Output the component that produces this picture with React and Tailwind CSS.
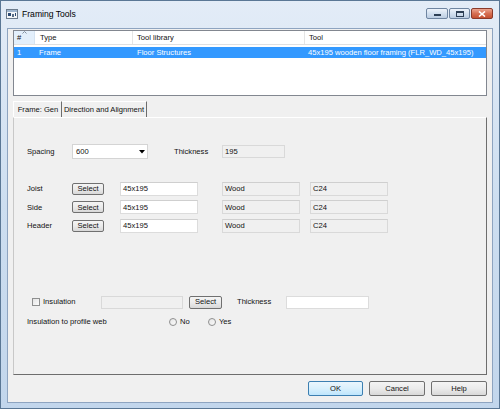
import React from 'react';

const ReadBox = ({ w, children }) => (
  <div className={`${w} h-[14px] bg-[#f0f0f0] border border-[#d9d9d9] border-t-[#cfcfcf] flex items-center pl-[2px]`}>
    {children}
  </div>
);

const WhiteBox = ({ w, h = 'h-[14px]', children }) => (
  <div className={`${w} ${h} bg-white border border-[#dcdcdc] border-t-[#cfcfcf] flex items-center pl-[2px]`}>
    {children}
  </div>
);

const Btn = ({ w, h = 'h-[12px]', children, primary }) => (
  <div
    className={`${w} ${h} rounded-[2px] border flex items-center justify-center ${
      primary
        ? 'border-[#3c7fb1] bg-gradient-to-b from-[#eaf6fd] via-[#d9f0fc] to-[#bee6fd]'
        : 'border-[#707070] bg-gradient-to-b from-[#f4f4f4] via-[#ebebeb] to-[#d8d8d8]'
    }`}
  >
    {children}
  </div>
);

const Radio = () => (
  <div className="w-[8px] h-[8px] rounded-full border border-[#8e8f8f] bg-gradient-to-br from-[#e6e6e6] to-[#fafafa]" />
);

const PartRow = ({ label }) => (
  <div className="flex items-center h-[14px]">
    <div className="w-[45px]">{label}</div>
    <Btn w="w-[32px]">Select</Btn>
    <div className="ml-[16px]">
      <WhiteBox w="w-[78px]">45x195</WhiteBox>
    </div>
    <div className="ml-[24px]">
      <ReadBox w="w-[78px]">Wood</ReadBox>
    </div>
    <div className="ml-[10px]">
      <ReadBox w="w-[78px]">C24</ReadBox>
    </div>
  </div>
);

const App = () => {
  return (
    <div className="w-[500px] h-[409px] bg-gradient-to-b from-[#e3ecf7] via-[#cddef0] to-[#c2d6ec] border border-[#5a7795] flex flex-col font-['Liberation_Sans',Arial,sans-serif] text-[7.6px] text-[#111] leading-none overflow-hidden">
      {/* title bar */}
      <div className="h-[27px] flex items-start pl-[5px] pr-[6px] pt-[7px]">
        <svg width="12" height="10" viewBox="0 0 12 10" className="mt-[1px]">
          <rect x="0.5" y="0.5" width="11" height="9" fill="#f4f6f8" stroke="#6b7b8c" />
          <rect x="1" y="1" width="10" height="2" fill="#9fb6cf" />
          <rect x="2" y="4" width="3" height="3" fill="#2b4a73" />
          <rect x="6" y="5" width="2" height="3" fill="#5a6f86" />
          <rect x="9" y="4" width="1" height="3" fill="#2b4a73" />
        </svg>
        <div className="ml-[4px] mt-[2px] text-[8.6px] text-black">Framing Tools</div>
        <div className="ml-auto flex gap-[1px]">
          <div className="w-[22px] h-[11px] rounded-[2px] border border-[#6f85a1] bg-gradient-to-b from-[#eef3fa] via-[#d3e0ef] to-[#bccde2] flex items-center justify-center">
            <div className="w-[7px] h-[2px] bg-[#2e3f55] mt-[3px]" />
          </div>
          <div className="w-[21px] h-[11px] rounded-[2px] border border-[#6f85a1] bg-gradient-to-b from-[#eef3fa] via-[#d3e0ef] to-[#bccde2] flex items-center justify-center">
            <div className="w-[8px] h-[6px] border border-[#2e3f55] border-t-2" />
          </div>
          <div className="w-[22px] h-[11px] rounded-[2px] border border-[#8a3a2a] bg-gradient-to-b from-[#eba48f] via-[#d66f52] to-[#c44f30] flex items-center justify-center">
            <svg width="8" height="6" viewBox="0 0 8 6">
              <path d="M1 0.5 L7 5.5 M7 0.5 L1 5.5" stroke="#ffffff" strokeWidth="1.6" />
            </svg>
          </div>
        </div>
      </div>

      {/* client area */}
      <div className="mx-[6px] mb-[5px] flex-1 bg-[#f0f0f0] border border-[#8ea4c0] px-[5px] pt-[1px] flex flex-col">
        {/* list view */}
        <div className="h-[66px] bg-white border border-[#828790] flex flex-col">
          <div className="h-[14px] flex border-b border-[#e0e0e0]">
            <div className="w-[21px] relative bg-[#e3effb] border-r border-[#d5e3f1] flex items-center pl-[3px]">
              #
              <svg width="5" height="3" viewBox="0 0 5 3" className="absolute top-0 left-[8px]">
                <path d="M0.5 2.5 L2.5 0.5 L4.5 2.5" stroke="#6c7a8a" fill="none" strokeWidth="0.8" />
              </svg>
            </div>
            <div className="w-[98px] border-r border-[#e5e5e5] flex items-center pl-[5px]">Type</div>
            <div className="w-[172px] border-r border-[#e5e5e5] flex items-center pl-[4px]">Tool library</div>
            <div className="flex-1 flex items-center pl-[4px]">Tool</div>
          </div>
          <div className="mt-[2px] h-[11px] bg-[#3399ff] text-white flex items-center">
            <div className="w-[21px] pl-[3px]">1</div>
            <div className="w-[98px] pl-[4px]">Frame</div>
            <div className="w-[172px] pl-[4px]">Floor Structures</div>
            <div className="flex-1 pl-[3px]">45x195 wooden floor framing (FLR_WD_45x195)</div>
          </div>
        </div>

        {/* tabs */}
        <div className="mt-[5px] h-[16px] flex">
          <div className="w-[49px] border-l border-t border-white border-r border-r-[#6d6d6d] flex items-center justify-center pl-[1px]">
            Frame: Gen
          </div>
          <div className="w-[85px] border-t border-white border-r border-r-[#6d6d6d] flex items-center justify-center">
            Direction and Alignment
          </div>
        </div>

        {/* tab panel */}
        <div className="h-[258px] border border-l-[#c8c8c8] border-t-[#ffffff] border-r-[#6d6d6d] border-b-[#6d6d6d] pl-[13px] pt-[26px] flex flex-col">
          <div className="flex items-center h-[15px]">
            <div className="w-[45px]">Spacing</div>
            <div className="w-[76px] h-[15px] bg-white border border-[#d4d4d4] flex items-center pl-[3px] pr-[1px]">
              <span>600</span>
              <svg width="6" height="4" viewBox="0 0 6 4" className="ml-auto mr-[1px]">
                <path d="M0 0 L6 0 L3 3.5 Z" fill="#000" />
              </svg>
            </div>
            <div className="ml-[26px] w-[48px]">Thickness</div>
            <div className="w-[63px] h-[13px] bg-[#f0f0f0] border border-[#d9d9d9] flex items-center pl-[2px]">195</div>
          </div>

          <div className="mt-[23px] flex flex-col gap-[4.3px]">
            <PartRow label="Joist" />
            <PartRow label="Side" />
            <PartRow label="Header" />
          </div>

          <div className="mt-[63px] flex items-center h-[13px]">
            <div className="ml-[5px] w-[8px] h-[8px] border border-[#8e8f8f] bg-gradient-to-br from-[#e4e4e4] to-[#fbfbfb]" />
            <div className="ml-[3px] w-[58px]">Insulation</div>
            <div className="w-[82px] h-[13px] bg-[#f0f0f0] border border-[#d9d9d9]" />
            <div className="ml-[6px]">
              <Btn w="w-[33px]" h="h-[13px]">Select</Btn>
            </div>
            <div className="ml-[15px] w-[49px]">Thickness</div>
            <div className="w-[83px] h-[13px] bg-white border border-[#dcdcdc]" />
          </div>

          <div className="mt-[7px] flex items-center h-[12px]">
            <div className="w-[142px]">Insulation to profile web</div>
            <Radio />
            <div className="ml-[3px] w-[28px]">No</div>
            <Radio />
            <div className="ml-[3px]">Yes</div>
          </div>
        </div>

        {/* dialog buttons */}
        <div className="mt-[6px] flex justify-end gap-[6px]">
          <Btn w="w-[55px]" h="h-[15px]" primary>OK</Btn>
          <Btn w="w-[56px]" h="h-[15px]">Cancel</Btn>
          <Btn w="w-[56px]" h="h-[15px]">Help</Btn>
        </div>
      </div>
    </div>
  );
};

export default App;
